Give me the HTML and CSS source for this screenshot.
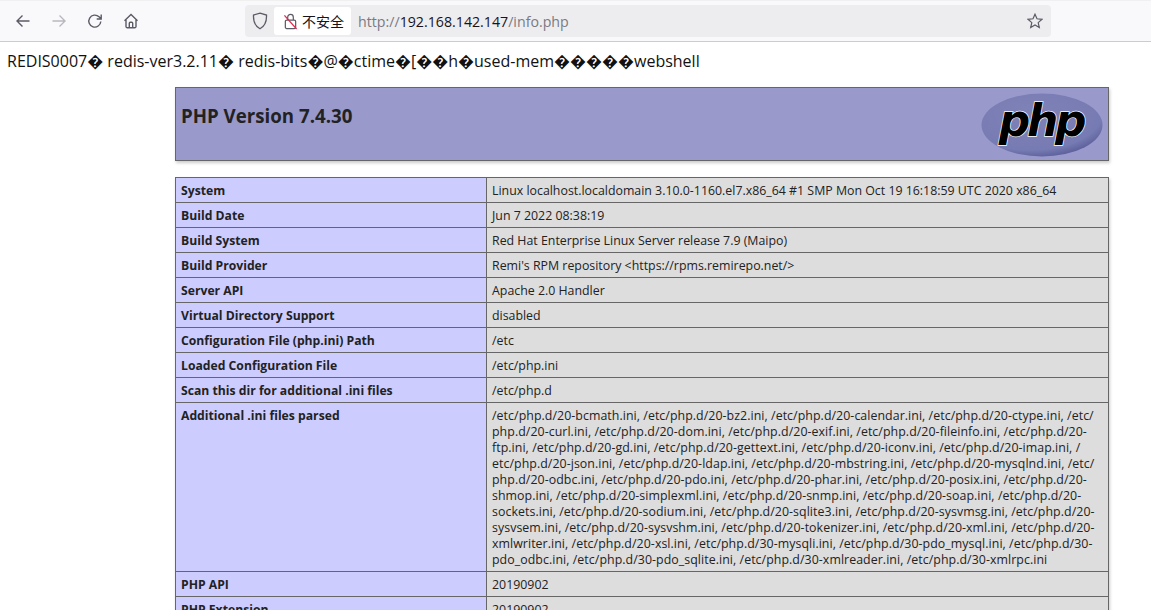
FILE: index.html
```html
<!DOCTYPE html>
<html lang="en">
<head>
<meta charset="utf-8">
<title>phpinfo()</title>
<link rel="stylesheet" href="styles.css">
</head>
<body>
<header class="toolbar">
  <nav class="nav-buttons">
    <svg class="nav-icon" viewBox="0 0 16 16"><path d="M14.5 8H2M7.5 2.5 2 8l5.500 5.500"/></svg>
    <svg class="nav-icon nav-icon-disabled" viewBox="0 0 16 16"><path d="M1.500 8H14M8.500 2.500 14 8l-5.500 5.500"/></svg>
    <svg class="nav-icon" viewBox="0 0 16 16"><path d="M13.800 8.500A6 6 0 1 1 12 3.800L14 5.800M14.200 1.500v4.500H9.700"/></svg>
    <svg class="nav-icon" viewBox="0 0 16 16"><path d="M1.500 7.700 8 1.500l6.500 6.200M3 6.500v7a1.200 1.200 0 0 0 1.200 1.200h7.600a1.200 1.200 0 0 0 1.200-1.200v-7M6.300 14.500v-4.300a1 1 0 0 1 1-1h1.400a1 1 0 0 1 1 1v4.300"/></svg>
  </nav>
  <div class="urlbar">
    <svg class="shield" viewBox="0 0 16 18"><path d="M8 1.200 14.500 3c.3 6-1 10.800-6.500 13.800C2.500 13.800 1.200 9 1.500 3z"/></svg>
    <div class="chip">
      <svg class="lock" viewBox="0 0 16 18"><rect x="2.500" y="7.500" width="11" height="9" rx="1.500"/><path d="M5 7.500V4.500a3 3 0 0 1 6 0v3"/><path class="lock-slash" d="M1.500 2.500 14.500 17"/></svg>
      <span class="chip-text">不安全</span>
    </div>
    <div class="url"><span class="url-dim">http://</span>192.168.142.147<span class="url-dim">/info.php</span></div>
    <svg class="star" viewBox="0 0 16 16"><path d="M8 1.200 10 5.800l5 .5-3.800 3.300 1.100 4.900L8 12l-4.300 2.500 1.100-4.900L1 6.300l5-.5z"/></svg>
  </div>
</header>
<main class="page">
  <p class="dump">REDIS0007� redis-ver3.2.11� redis-bits�@�ctime�[��h�used-mem�����webshell</p>
  <div class="phpinfo">
    <div class="banner">
      <h1 class="version">PHP Version 7.4.30</h1>
      <svg class="logo" viewBox="0 0 122 64">
        <defs>
          <radialGradient id="logo-fill" cx="0.4" cy="0.3" r="0.8">
            <stop offset="0" stop-color="#7f82b6"/>
            <stop offset="0.75" stop-color="#777bb3"/>
            <stop offset="1" stop-color="#4c4f8c"/>
          </radialGradient>
        </defs>
        <ellipse cx="61" cy="32" rx="60.500" ry="31.500" fill="url(#logo-fill)"/>
        <text class="logo-text" x="60" y="43" text-anchor="middle">php</text>
      </svg>
    </div>
    <table class="info">
      <tbody>
        <tr><td class="key">System</td><td class="val">Linux localhost.localdomain 3.10.0-1160.el7.x86_64 #1 SMP Mon Oct 19 16:18:59 UTC 2020 x86_64</td></tr>
        <tr><td class="key">Build Date</td><td class="val">Jun 7 2022 08:38:19</td></tr>
        <tr><td class="key">Build System</td><td class="val">Red Hat Enterprise Linux Server release 7.9 (Maipo)</td></tr>
        <tr><td class="key">Build Provider</td><td class="val">Remi's RPM repository &lt;https://rpms.remirepo.net/&gt;</td></tr>
        <tr><td class="key">Server API</td><td class="val">Apache 2.0 Handler</td></tr>
        <tr><td class="key">Virtual Directory Support</td><td class="val">disabled</td></tr>
        <tr><td class="key">Configuration File (php.ini) Path</td><td class="val">/etc</td></tr>
        <tr><td class="key">Loaded Configuration File</td><td class="val">/etc/php.ini</td></tr>
        <tr><td class="key">Scan this dir for additional .ini files</td><td class="val">/etc/php.d</td></tr>
        <tr><td class="key">Additional .ini files parsed</td><td class="val val-list">/etc/php.d/20-bcmath.ini, /etc/php.d/20-bz2.ini, /etc/php.d/20-calendar.ini, /etc/php.d/20-ctype.ini, /etc/<br>php.d/20-curl.ini, /etc/php.d/20-dom.ini, /etc/php.d/20-exif.ini, /etc/php.d/20-fileinfo.ini, /etc/php.d/20-<br>ftp.ini, /etc/php.d/20-gd.ini, /etc/php.d/20-gettext.ini, /etc/php.d/20-iconv.ini, /etc/php.d/20-imap.ini, /<br>etc/php.d/20-json.ini, /etc/php.d/20-ldap.ini, /etc/php.d/20-mbstring.ini, /etc/php.d/20-mysqlnd.ini, /etc/<br>php.d/20-odbc.ini, /etc/php.d/20-pdo.ini, /etc/php.d/20-phar.ini, /etc/php.d/20-posix.ini, /etc/php.d/20-<br>shmop.ini, /etc/php.d/20-simplexml.ini, /etc/php.d/20-snmp.ini, /etc/php.d/20-soap.ini, /etc/php.d/20-<br>sockets.ini, /etc/php.d/20-sodium.ini, /etc/php.d/20-sqlite3.ini, /etc/php.d/20-sysvmsg.ini, /etc/php.d/20-<br>sysvsem.ini, /etc/php.d/20-sysvshm.ini, /etc/php.d/20-tokenizer.ini, /etc/php.d/20-xml.ini, /etc/php.d/20-<br>xmlwriter.ini, /etc/php.d/20-xsl.ini, /etc/php.d/30-mysqli.ini, /etc/php.d/30-pdo_mysql.ini, /etc/php.d/30-<br>pdo_odbc.ini, /etc/php.d/30-pdo_sqlite.ini, /etc/php.d/30-xmlreader.ini, /etc/php.d/30-xmlrpc.ini</td></tr>
        <tr><td class="key">PHP API</td><td class="val">20190902</td></tr>
        <tr><td class="key">PHP Extension</td><td class="val">20190902</td></tr>
      </tbody>
    </table>
  </div>
</main>
</body>
</html>
```

FILE: styles.css
```css
html, body {
  margin: 0;
  height: 100%;
  overflow: hidden;
  background: #fff;
}

body {
  font-family: "Open Sans", "Noto Sans", sans-serif;
  color: #222;
}

.toolbar {
  display: flex;
  align-items: center;
  box-sizing: border-box;
  height: 42px;
  padding: 0 100px 0 15px;
  background: #f9f9fb;
  border-top: 1px solid #f0f0f0;
  border-bottom: 1px solid #ccc;
}

.nav-buttons {
  display: flex;
  align-items: center;
  gap: 20px;
  width: 230px;
}

.nav-icon {
  width: 16px;
  height: 16px;
  fill: none;
  stroke: #5b5b66;
  stroke-width: 1.400;
}

.nav-icon-disabled {
  stroke: #b8b8bf;
}

.urlbar {
  display: flex;
  align-items: center;
  flex: 1;
  height: 32px;
  padding: 0 8px 0 7px;
  background: #ededf0;
  border-radius: 4px;
}

.shield {
  width: 16px;
  height: 18px;
  fill: none;
  stroke: #5b5b66;
  stroke-width: 1.300;
}

.chip {
  display: flex;
  align-items: center;
  gap: 4px;
  width: 77px;
  box-sizing: border-box;
  height: 28px;
  margin-left: 6px;
  padding: 0 6px 0 9px;
  background: #fff;
  border-radius: 3px;
}

.lock {
  width: 15px;
  height: 17px;
  flex: none;
  fill: none;
  stroke: #5b5b66;
  stroke-width: 1.300;
}

.lock-slash {
  stroke: #e22850;
}

.chip-text {
  font-family: "Noto Sans CJK SC", sans-serif;
  font-size: 14px;
  color: #15141a;
  white-space: nowrap;
}

.url {
  flex: 1;
  margin-left: 7px;
  font-size: 14.200px;
  color: #15141a;
  white-space: nowrap;
}

.url-dim {
  color: #7a7a82;
}

.star {
  width: 16px;
  height: 16px;
  fill: none;
  stroke: #5b5b66;
  stroke-width: 1.200;
}

.page {
  padding: 0 7px;
}

.dump {
  margin: 0;
  padding-top: 8px;
  height: 36px;
  box-sizing: border-box;
  font-size: 16px;
  line-height: 22px;
  color: #111;
  white-space: nowrap;
}

.phpinfo {
  width: 934px;
  margin: 9px 0 0 168px;
  font-size: 12.370px;
  line-height: 16px;
}

.banner {
  display: flex;
  justify-content: space-between;
  box-sizing: border-box;
  height: 74px;
  padding: 5px 5px 0 5px;
  background: #99c;
  border: 1px solid #666;
  box-shadow: 1px 2px 3px #ccc;
}

.version {
  margin: 0;
  padding-top: 9px;
  font-size: 18.700px;
  line-height: 28px;
  font-weight: 700;
  color: #222;
}

.logo {
  width: 122px;
  height: 64px;
}

.logo-text {
  font-family: "DejaVu Sans", sans-serif;
  font-size: 44px;
  font-weight: 700;
  font-style: italic;
  fill: #000;
  stroke: #fff;
  stroke-width: 1.400;
  paint-order: stroke;
  letter-spacing: -3.300px;
}

.info {
  width: 934px;
  margin-top: 16px;
  border-collapse: collapse;
  table-layout: fixed;
  box-shadow: 1px 2px 3px #ccc;
}

.info td {
  padding: 5px 5px 3px;
  border: 1px solid #666;
  vertical-align: top;
  white-space: nowrap;
}

.key {
  width: 300px;
  background: #ccf;
  font-size: 12.200px;
  font-weight: 700;
}

.val {
  background: #ddd;
}

.val-list {
  letter-spacing: 0.060px;
}
```
